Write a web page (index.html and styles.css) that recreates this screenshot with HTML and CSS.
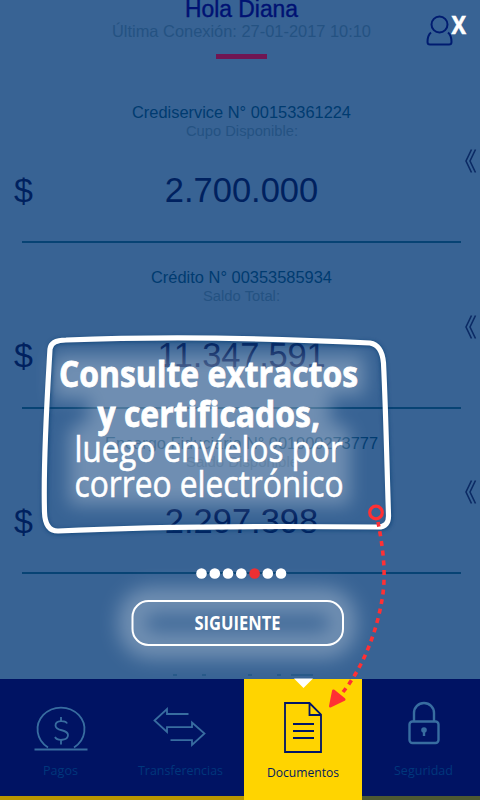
FILE: index.html
```html
<!DOCTYPE html>
<html lang="es">
<head>
<meta charset="utf-8">
<title>Documentos</title>
<link rel="stylesheet" href="styles.css">
</head>
<body>
<div class="app">
  <main class="content">
    <header class="header">
      <h1><svg width="114" height="24"><text x="0" y="17" textLength="113" lengthAdjust="spacingAndGlyphs">Hola Diana</text></svg></h1>
      <p><svg width="260" height="20"><text x="0" y="15" textLength="259" lengthAdjust="spacingAndGlyphs">Última Conexión: 27-01-2017 10:10</text></svg></p>
      <div class="accent"></div>
    </header>
    <section class="account">
      <h2><svg width="220" height="20"><text x="0" y="16" textLength="219" lengthAdjust="spacingAndGlyphs">Crediservice N° 00153361224</text></svg></h2>
      <p><svg width="112" height="19"><text x="0" y="14" textLength="112" lengthAdjust="spacingAndGlyphs">Cupo Disponible:</text></svg></p>
      <div class="amount"><span class="currency">$</span><span>2.700.000</span></div>
      <svg class="chevron" width="12" height="26" viewBox="0 0 12 26"><path d="M6.5 1.5 1 13l5.500 11.500M10.500 1.500 5 13l5.500 11.500"/></svg>
    </section>
    <section class="account">
      <h2><svg width="181" height="20"><text x="0" y="16" textLength="181" lengthAdjust="spacingAndGlyphs">Crédito N° 00353585934</text></svg></h2>
      <p><svg width="77" height="19"><text x="0" y="14" textLength="77" lengthAdjust="spacingAndGlyphs">Saldo Total:</text></svg></p>
      <div class="amount"><span class="currency">$</span><span class="wide">11.347.591</span></div>
      <svg class="chevron" width="12" height="26" viewBox="0 0 12 26"><path d="M6.5 1.5 1 13l5.500 11.500M10.500 1.500 5 13l5.500 11.500"/></svg>
    </section>
    <section class="account">
      <h2><svg width="273" height="20"><text x="0" y="16" textLength="273" lengthAdjust="spacingAndGlyphs">Encargo Fiduciario N° 001000273777</text></svg></h2>
      <p><svg width="112" height="19"><text x="0" y="14" textLength="112" lengthAdjust="spacingAndGlyphs">Saldo Disponible</text></svg></p>
      <div class="amount"><span class="currency">$</span><span>2.297.398</span></div>
      <svg class="chevron" width="12" height="26" viewBox="0 0 12 26"><path d="M6.500 1.500 1 13l5.500 11.500M10.500 1.500 5 13l5.500 11.500"/></svg>
    </section>
    <svg class="peek" width="480" height="4"><path d="M173 2h4M202 2h4M248 2h4M277 2h4M291 2h22"/></svg>
  </main>

  <nav class="tabs">
    <a class="tab">
      <svg width="54" height="46" viewBox="0 0 54 46"><path class="thick" d="M14 40.500A23.500 21.800 0 1 1 40 40.500M.5 42.500h53"/><path class="thick" d="M33 16.500c-1-3-11.500-4-11.500 2 0 6.500 12.500 3 12.500 9.500 0 6-11 6-13 2M27 10v4.500M27 32.500v5"/></svg>
      <span><svg width="36" height="18"><text x="0" y="13" textLength="35" lengthAdjust="spacingAndGlyphs">Pagos</text></svg></span>
    </a>
    <a class="tab transfer">
      <svg width="54" height="46" viewBox="0 0 54 46"><path class="thick" d="M36.500 7H15V2L2.500 13.500 15 25v-4.800H40V15.500L52.500 26.500 40 38v-4.800H18.500"/></svg>
      <span><svg width="86" height="18"><text x="0" y="13" textLength="85" lengthAdjust="spacingAndGlyphs">Transferencias</text></svg></span>
    </a>
    <a class="tab active">
      <svg width="38" height="52" viewBox="0 0 38 52"><path class="thick" d="M1 1h24.500L37 12.500V50H1ZM25.500 1v12H37M9 22h21M9 29h21M9 36h21"/></svg>
      <span><svg width="74" height="18"><text x="1" y="13" textLength="72" lengthAdjust="spacingAndGlyphs">Documentos</text></svg></span>
    </a>
    <a class="tab lock">
      <svg width="32" height="44" viewBox="0 0 32 44"><rect class="thick" x="1.500" y="20.500" width="29" height="21.500" rx="3"/><path class="thick" d="M6 20V12a10 10 0 0 1 20 0v8"/><circle class="dot" cx="16" cy="29" r="2.800"/><path class="thick" d="M16 29v6"/></svg>
      <span><svg width="60" height="18"><text x="0" y="13" textLength="59" lengthAdjust="spacingAndGlyphs">Seguridad</text></svg></span>
    </a>
  </nav>

  <svg class="profile" width="28" height="32" viewBox="0 0 28 32"><circle cx="13.500" cy="9.500" r="8"/><path d="M5 17.500C2 20 1.500 23.500 1.500 27q0 2.500 2.500 2.500h19q2.500 0 2.500-2.500c0-4-.5-7-3.500-9.500"/></svg>

  <svg class="guide" width="480" height="800" viewBox="0 0 480 800">
    <defs>
      <filter id="glow" x="-20%" y="-30%" width="140%" height="160%"><feGaussianBlur stdDeviation="9"/></filter>
      <filter id="halo" x="-20%" y="-80%" width="140%" height="260%"><feGaussianBlur stdDeviation="10"/></filter>
      <filter id="shade" x="-10%" y="-10%" width="120%" height="120%"><feGaussianBlur stdDeviation="2"/></filter>
    </defs>
    <path class="glow" filter="url(#glow)" d="M60 362H357V388H323V428L343 434V498H76V434L96 424V392H60Z"/>
    <rect class="halo" filter="url(#halo)" x="132" y="601" width="211" height="44" rx="18"/>
    <path class="frame-shade" filter="url(#shade)" d="M51 350Q50 341 65 341C170 337 270 339 372 344Q382 346 383 363C386 415 388 470 389.500 517Q390 528 378 528C280 527 160 527 58 532Q45 532 44.500 512C44 460 48 400 51 350Z"/>
    <path class="frame" d="M50 349Q51 340 66 340C170 336 270 338 370 343Q382 345 383.500 363C386 415 387 470 388.500 515Q389 527 378 527C280 526 160 526 58 531Q45 531 44.500 512C43 460 47 400 50 349Z"/>
    <g class="message">
      <text class="strong" x="59" y="386.500" textLength="299" lengthAdjust="spacingAndGlyphs">Consulte extractos</text>
      <text class="strong" x="97.500" y="426.500" textLength="222.500" lengthAdjust="spacingAndGlyphs">y certificados,</text>
      <text x="74.500" y="461.500" textLength="268" lengthAdjust="spacingAndGlyphs">luego envíelos por</text>
      <text x="74.500" y="496.500" textLength="269" lengthAdjust="spacingAndGlyphs">correo electrónico</text>
    </g>
    <g class="dots"><circle cx="201.500" cy="573.500" r="5.300"/><circle cx="214.800" cy="573.500" r="5.300"/><circle cx="228" cy="573.500" r="5.300"/><circle cx="241.300" cy="573.500" r="5.300"/><circle class="current" cx="254.600" cy="573.500" r="5.300"/><circle cx="267.800" cy="573.500" r="5.300"/><circle cx="281" cy="573.500" r="5.300"/></g>
    <rect class="button" x="132.500" y="601" width="210.500" height="44" rx="16"/>
    <text class="next" x="194.500" y="630" textLength="86" lengthAdjust="spacingAndGlyphs">SIGUIENTE</text>
    <text class="close" x="451.500" y="34" textLength="14.500" lengthAdjust="spacingAndGlyphs">X</text>
    <path class="notch" d="M294 678.500h19l-9.500 9.500z"/>
    <circle class="origin" cx="376" cy="512.500" r="6.300"/>
    <path class="trail" d="M378 522C382 543 387 572 382 600C376 634 363 667 343 692"/>
    <path class="arrow" d="M333.500 691 344 699.500 330.500 706Z"/>
  </svg>
</div>
</body>
</html>
```
FILE: styles.css
```css
* { box-sizing: border-box; }
body { margin: 0; font-family: "Liberation Sans", Arial, sans-serif; }
svg { display: block; overflow: visible; }
.app { position: relative; width: 480px; height: 800px; overflow: hidden; background: #386394; display: flex; flex-direction: column; }
.content { height: 679px; display: flex; flex-direction: column; }
.header { height: 77px; display: flex; flex-direction: column; align-items: center; padding-left: 3px; }
h1, h2, p { margin: 0; font-weight: 400; }
h1 { height: 22px; font-size: 23px; }
h1 text { fill: #001273; stroke: #001273; stroke-width: .4px; }
.header p { height: 32px; font-size: 16.5px; }
.header p text { fill: #245282; }
.accent { width: 51px; height: 5px; background: #701653; margin-right: 1px; }
.account { position: relative; height: 165.5px; flex: none; display: flex; flex-direction: column; align-items: center; padding: 24.5px 0 0 3px; }
.account::after { content: ""; position: absolute; left: 22px; right: 19px; bottom: -.5px; height: 2px; background: #074374; }
.account h2 { height: 20px; font-size: 16.3px; }
.account h2 text { fill: #003b70; }
.account p { height: 42px; font-size: 14.7px; }
.account p text { fill: #245282; }
.amount { position: relative; width: 100%; text-align: center; font-size: 34.5px; line-height: 53px; color: #00215f; }
.amount .wide { letter-spacing: -.2px; }
.currency { position: absolute; left: 11px; font-size: 34px; }
.chevron { position: absolute; left: 465px; top: 71px; }
.chevron path { fill: none; stroke: #0b2a64; stroke-width: 1.6; }
.peek { margin-top: 99px; }
.peek path { stroke: #205584; stroke-width: 1.5; }
.tabs { height: 121px; display: grid; grid-template-columns: 122px 122px 118px 118px; background: linear-gradient(90deg, #b99500 0 50.800%, #4d5932 50.800%); }
.tab { height: 117px; background: #001363; color: #00377c; display: flex; flex-direction: column; align-items: center; padding-top: 28px; }
.tab span { margin-top: 9px; font-family: "Open Sans", sans-serif; font-size: 13px; }
.tab text { fill: currentColor; }
.tab .thick { fill: none; stroke: #386da0; stroke-width: 1.8; }
.tab .dot { fill: #386da0; }
.tab.transfer { padding-right: 8px; }
.tab.transfer span { margin-left: 4px; }
.tab.active { height: 121px; background: #ffd400; color: #001a60; padding-top: 23px; }
.tab.active .thick { stroke: #001568; }
.tab.active span { margin-top: 10px; }
.tab.lock { padding-top: 22px; padding-left: 5px; }
.tab.lock .thick { stroke-width: 2.400; }
.tab.lock span { margin-top: 17px; }
.profile { position: absolute; left: 426px; top: 15px; fill: none; stroke: #001c70; stroke-width: 2; }
.guide { position: absolute; inset: 0; }
.glow { fill: #fff; stroke: #fff; stroke-width: 14; opacity: .28; }
.halo { fill: none; stroke: #fff; stroke-width: 26; opacity: .3; }
.frame-shade { fill: none; stroke: #073b70; stroke-width: 5; opacity: .7; }
.frame { fill: none; stroke: #fff; stroke-width: 5.200; }
.message { fill: #fff; font-family: "Open Sans", sans-serif; font-size: 36.500px; stroke: #fff; stroke-width: .6px; }
.message .strong { font-weight: 700; font-size: 36.500px; stroke-width: .8px; }
.dots { fill: #fff; }
.dots .current { fill: #ec3033; }
.button { fill: none; stroke: #fff; stroke-width: 2; }
.next { fill: #fff; font: 700 20px "Open Sans", sans-serif; }
.close { fill: #fff; stroke: #fff; stroke-width: .6px; font: 700 25px "Open Sans", sans-serif; }
.notch { fill: #fff; }
.origin { fill: none; stroke: #ff3034; stroke-width: 3.200; }
.trail { fill: none; stroke: #ff3034; stroke-width: 3.600; stroke-dasharray: 5 4.700; }
.arrow { fill: #ff3034; stroke: #ff3034; stroke-width: 3; stroke-linejoin: round; }
```
